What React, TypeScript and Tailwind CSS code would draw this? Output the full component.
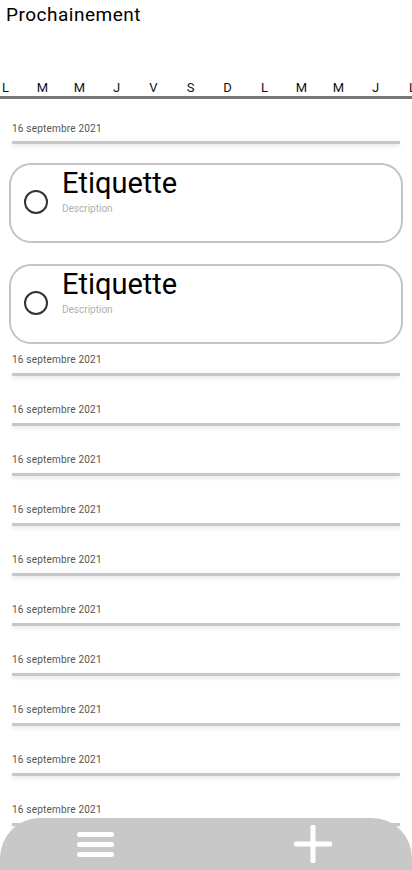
import { useMemo } from "react";

const days = ["L", "M", "M", "J", "V", "S", "D", "L", "M", "M", "J", "L"];

const DateRow = ({ first = false }: { first?: boolean }) => (
  <div className={first ? "pt-[24px]" : "pt-[10px] pb-[18px]"}>
    <p className="pl-[12px] text-[10px] leading-[12px] tracking-[0.2px] text-[#555]">16 septembre 2021</p>
    <div
      className={`mx-[12px] h-[3px] bg-[#c8c8c8] shadow-[0_2px_4px_rgba(0,0,0,0.12)] ${first ? "mt-[6px]" : "mt-[7px]"}`}
    />
  </div>
);

const TaskCard = () => (
  <div className="mx-[9px] flex h-[80px] items-start rounded-[22px] border-2 border-[#c4c4c4] pl-[13px]">
    <div className="mt-[25px] h-[24px] w-[24px] shrink-0 rounded-full border-2 border-[#333]" />
    <div className="ml-[14px] flex flex-col pt-[2px]">
      <span className="text-[29px] leading-[32px] text-black">Etiquette</span>
      <span className="mt-[4px] text-[10px] leading-[12px] text-[#b0b0b0]">Description</span>
    </div>
  </div>
);

export default function App() {
  const rows = useMemo(() => Array.from({ length: 11 }, (_, i) => i), []);

  return (
    <div className="relative h-[870px] overflow-hidden bg-white font-['Roboto',sans-serif]">
      <h1 className="pl-[6px] pt-[4px] text-[19px] leading-[22px] tracking-[0.5px] text-black">Prochainement</h1>

      <div className="mt-[54px] overflow-hidden">
        <div className="-ml-[13px] flex">
          {days.map((d, i) => (
            <span key={i} className="w-[37px] shrink-0 text-center text-[13px] leading-[16px] text-[#111]">
              {d}
            </span>
          ))}
        </div>
      </div>
      <div className="h-[3px] bg-[#777]" />

      <DateRow first />
      <div className="mt-[19px] flex flex-col gap-[21px]">
        <TaskCard />
        <TaskCard />
      </div>
      {rows.map((r) => (
        <DateRow key={r} />
      ))}

      <nav className="absolute bottom-0 left-0 flex h-[52px] w-full items-center rounded-t-[40px] bg-[#c8c8c8]">
        <div className="ml-[77px] flex w-[37px] flex-col gap-[5px]">
          <span className="h-[5px] rounded-full bg-white" />
          <span className="h-[5px] rounded-full bg-white" />
          <span className="h-[5px] rounded-full bg-white" />
        </div>
        <svg className="ml-[180px]" width="38" height="38" viewBox="0 0 38 38">
          <path d="M19 2v34M2 19h34" stroke="white" strokeWidth="5" strokeLinecap="round" />
        </svg>
      </nav>
    </div>
  );
}
